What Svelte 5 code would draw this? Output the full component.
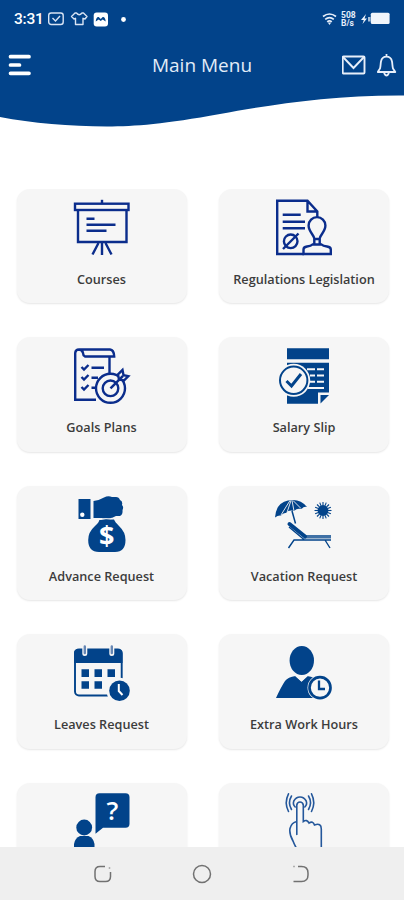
<script lang="ts">
	interface MenuItem {
		icon: string;
		label: string;
	}

	const items: MenuItem[] = [
		{ icon: 'courses', label: 'Courses' },
		{ icon: 'regulations', label: 'Regulations Legislation' },
		{ icon: 'goals', label: 'Goals Plans' },
		{ icon: 'salary', label: 'Salary Slip' },
		{ icon: 'advance', label: 'Advance Request' },
		{ icon: 'vacation', label: 'Vacation Request' },
		{ icon: 'leaves', label: 'Leaves Request' },
		{ icon: 'hours', label: 'Extra Work Hours' },
		{ icon: 'help', label: '' },
		{ icon: 'touch', label: '' }
	];

	const rays = Array.from({ length: 16 }, (_, i) => i * 22.5);
</script>

<div class="screen">
	<header>
		<svg class="wave" viewBox="0 0 404 128" preserveAspectRatio="none">
			<path d="M0 0H404V95.5C330 95 270 105 220 114C165 124 135 126.500 107 126.500C70 126.500 32 123 0 117Z" fill="#02438a" />
		</svg>
		<div class="status">
			<span class="time">3:31</span>
			<svg class="left-icons" width="82" height="18" viewBox="0 0 82 18" fill="none" stroke="#d9e4f4" stroke-width="1.4">
				<rect x="1.700" y="3" width="14.500" height="11.500" rx="2.500" />
				<path d="M5.500 8L8.500 11L13 6" />
				<path d="M28 3L24.500 6.500L27 9L28.500 8.300V14.500H36V8.300L38 9L40 6.500L36.500 3H35Q32.200 6.500 29.500 3Z" stroke-linejoin="round" />
				<rect x="46.700" y="2.500" width="14.300" height="14" rx="3" fill="#fff" stroke="none" />
				<path d="M48.700 11.500Q49.200 6.500 51.700 7L53.700 9L55.700 7Q58.200 6.500 58.700 11.500L55.700 9.500L53.700 11L51.700 9.500Z" fill="#02438a" stroke="none" />
				<circle cx="76.500" cy="9.500" r="2.400" fill="#fff" stroke="none" />
			</svg>
			<span class="spacer"></span>
			<svg class="wifi" width="15" height="14" viewBox="0 0 15 14" fill="none" stroke="#e6eefa" stroke-width="1.700">
				<path d="M1 4.500Q7.500 -.5 14 4.500M3.200 7.300Q7.500 3.800 11.800 7.300M5.200 9.800Q7.500 8 9.800 9.800" />
				<path d="M5.800 10.500L7.500 13L9.200 10.500Z" fill="#e6eefa" stroke="none" />
			</svg>
			<span class="rate"><span>508</span><span>B/s</span></span>
			<svg class="battery" width="32" height="14" viewBox="0 0 32 14" fill="#f1f5fb">
				<path d="M4 2L-1 8H1.800L.5 12L5 6.500H2.500Z" />
				<path d="M6 5H8.500V9.500H6Z" opacity=".7" />
				<rect x="8.800" y=".7" width="18.800" height="11.300" rx="1.500" />
			</svg>
		</div>
		<div class="titlebar">
			<svg class="burger" width="24" height="24" viewBox="0 0 24 24" stroke="#fff" stroke-width="3.700" stroke-linecap="round">
				<path d="M3.500 3.700H22M3.500 12H12.500M3.500 20.300H22" />
			</svg>
			<h1>Main Menu</h1>
			<div class="actions">
				<svg width="24" height="24" viewBox="0 0 24 24" fill="none" stroke="#e8effa" stroke-width="1.900">
					<rect x=".7" y="3.500" width="21.800" height="17" rx="1" />
					<path d="M1 4L11.500 15L22 4" />
				</svg>
				<svg width="20" height="24" viewBox="0 0 20 24" fill="none" stroke="#e8effa" stroke-width="1.800" stroke-linejoin="round">
					<path d="M9.500 1V3.500M.7 19H18.300L16 15.500C15.300 13 15.500 11 15 8.500C14.300 5 12 3.700 9.500 3.700C7 3.700 4.700 5 4 8.500C3.500 11 3.700 13 3 15.500Z" />
					<path d="M7 20Q9.500 25 12 20" />
				</svg>
			</div>
		</div>
	</header>

	<main>
		{#each items as item}
			<section class="card">
				<svg class="icon" viewBox="0 0 56 56">
					{#if item.icon === 'courses'}
						<g class="line">
							<path d="M28 .8V4" />
							<rect x="1" y="4.700" width="53.500" height="6.300" />
							<path d="M4 11V43H52.500V11" />
							<path d="M12.500 19.700H20.500M12.500 25.700H41.500M12.500 31.700H32.500M24.500 44L18.500 55.500M28 44V56M31.500 44L37.500 55.500" />
						</g>
					{:else if item.icon === 'regulations'}
						<g class="line">
							<path d="M28 55H1.200V1.800H31.500L41.300 12.500V18M31.500 2V12.500H41" />
							<path d="M6.700 15.700H24.700M6.700 22.700H29M6.700 29.200H29" />
							<circle cx="14.700" cy="42.300" r="6.800" />
							<path d="M7 50L22.500 34.500" />
							<path d="M38.300 46V39.500C38 36 32.600 32.500 32.600 26.500A8.400 8.400 0 0 1 49.400 26.500C49.400 32.500 44 36 43.700 39.500V46M38.300 40H43.700" />
							<path d="M27.500 55V50.500Q27.500 48 31 47.500Q35 47 36.500 45.500H45.500Q47 47 51 47.500Q54.800 48 54.800 50.500V55Z" />
						</g>
					{:else if item.icon === 'goals'}
						<g class="line">
							<path d="M22 51.700H1.200V5Q1.500 1.500 5 1.500H36Q40 2 40.200 8.500H11Q9 7.500 9 5Q8.500 2 5 1.500" />
							<path d="M35.500 8.500V25" />
							<path d="M7.500 19L10 21.500L14.500 17M7.500 29L10 31.500L14.500 27M7.500 39L10 41.500L14.500 37M17.500 19.700H30M17.500 29.700H24M17.500 39.700H21" />
							<circle cx="36.500" cy="40.300" r="14.500" />
							<circle cx="36.500" cy="40.300" r="7.800" />
							<path d="M45 31.500L44 26.500L48.500 22L49.500 27.200L54.300 28.200L50 32.500Z" fill="#f6f6f6" />
							<path d="M36.500 40.300L49 27.800" />
						</g>
					{:else if item.icon === 'salary'}
						<path d="M11 .3H53V11.300H11ZM11 14.700H53V44.500H42V55.700H11Z" />
						<path d="M44.500 55.500V47H53Z" />
						<g stroke="#f6f6f6" stroke-width="2">
							<path d="M31 21.300H39M41 21.300H48M34 27.500H39M41 27.500H48M34 33.700H39M41 33.700H48M32 40H48" />
						</g>
						<circle cx="17.700" cy="32.300" r="16.500" fill="#f6f6f6" />
						<circle cx="17.700" cy="32.300" r="13.700" fill="#f6f6f6" stroke="#02438a" stroke-width="2" />
						<path d="M10.500 33L15.500 38L25 26" fill="none" stroke="#02438a" stroke-width="3" />
					{:else if item.icon === 'advance'}
						<path d="M4.500 3H16.500V23H4.500Z" />
						<circle cx="8.300" cy="18.800" r="2.200" fill="#fff" />
						<path d="M19.500 5Q26 4 30 1.500Q34 -.5 38 1H42Q45 1 46 4Q49 5 48 9Q50 11 48.500 14Q49 19 46 20H42Q37 23 32 22H19.500Z" />
						<path d="M25.500 23.500Q32 21.500 40 23.500Q41 26 45 30Q51.500 36 51.500 44Q51.500 56 41 56H25Q14.200 56 14.200 44Q14.200 36 21 30Q25 26.500 25.500 23.500Z" />
						<path d="M22 23.300Q27 24 32 22.700Q38 24 42 22" fill="none" stroke="#f6f6f6" stroke-width="1" />
						<text class="dollar" x="32.800" y="49">$</text>
					{:else if item.icon === 'vacation'}
						<path d="M-1 21.500Q0 7 12 4.500Q24 2 31 11Q28 10 25.500 13Q21 12 18 15Q13 13.500 10 17Q7 16.500 5 19.500Q2 19 -1 21.500Z" />
						<path d="M14 4.500L5 19M15 4.500L11 16.500M16 4.500L18 15M17 4.500L25 12.500" stroke="#f6f6f6" stroke-width=".9" fill="none" />
						<path d="M16 15L19.500 27.500" stroke="#02438a" stroke-width="1.500" />
						<circle cx="47" cy="14.500" r="5.400" />
						{#each rays as angle}
							<path d="M47 9.500V6" stroke="#02438a" stroke-width="1.100" transform="rotate({angle} 47 14.500)" />
						{/each}
						<path d="M13.500 28L29 40.500" stroke="#02438a" stroke-width="4" stroke-linecap="round" />
						<path d="M28 39H55V42.500H28Z" opacity=".75" />
						<path d="M12.500 52L18 44H55M13 31L28 43.500M49 44L54 52" fill="none" stroke="#02438a" stroke-width="1.400" />
					{:else if item.icon === 'leaves'}
						<rect x="1" y="4.500" width="46.700" height="46" rx="4" fill="none" stroke="#02438a" stroke-width="1.900" />
						<path d="M0 18V8Q0 4 4 4H44.500Q48.500 4 48.500 8V18Z" />
						<path d="M10.800 2V8.500M37.800 2V8.500" stroke="#f6f6f6" stroke-width="5" stroke-linecap="round" />
						<path d="M10.800 1.500V8M37.800 1.500V8" stroke="#6586b4" stroke-width="2.400" stroke-linecap="round" />
						<path d="M7.500 24.300H15V32H7.500ZM20.500 24.300H28V32H20.500ZM33.500 24.300H41V32H33.500ZM7.500 36.300H15V43.700H7.500ZM20.500 36.300H28V43.700H20.500Z" />
						<circle cx="45.500" cy="45.700" r="13" fill="#f6f6f6" />
						<circle cx="45.500" cy="45.700" r="10.300" />
						<path d="M44.800 39V46L48.500 50" fill="none" stroke="#fff" stroke-width="2" />
					{:else if item.icon === 'hours'}
						<ellipse cx="25.800" cy="15.500" rx="12.200" ry="14.500" />
						<path d="M0 53Q5 42 9 36Q12 32 19.500 31L25.500 36.500L31 31Q39 32 43 36L40 53Z" />
						<path d="M19.500 30L25.500 35.500L31.500 30" fill="none" stroke="#f6f6f6" stroke-width="2" />
						<circle cx="44" cy="42.700" r="12.500" fill="#f6f6f6" />
						<circle cx="44" cy="42.700" r="10.500" fill="#f6f6f6" stroke="#02438a" stroke-width="2.700" />
						<path d="M43 35.500V44H49" fill="none" stroke="#02438a" stroke-width="2.300" />
					{:else if item.icon === 'help'}
						<path d="M25.500 .2H51.500Q55.500 .2 55.500 4.200V30.800Q55.500 34.800 51.500 34.800H29L21.500 40.800V4.200Q21.500 .2 25.500 .2Z" />
						<text class="question" x="38.500" y="27">?</text>
						<circle cx="10.200" cy="34.500" r="7.900" />
						<path d="M0 56V51Q1 45 6 43H14.500Q19.500 45 20.500 51V56Z" />
					{:else}
						<g fill="none" stroke="#24579b" stroke-width="1.600" stroke-linecap="round">
							<path d="M20.800 41.500V12Q21.300 9 24 9Q26.700 9 27.300 12V28.500Q31 26 33 30Q37 27.500 38.500 32Q45.300 29.500 45.300 36V56M20.800 28.500Q15.500 29.500 14 35.500Q13 41 17 48Q19 53 21 56" />
							<path d="M19.200 14Q16.500 11.500 17.800 8Q20 4 24 4Q28 4 30.200 8Q31.500 11.500 28.800 14" />
							<path d="M15.500 3Q11.500 9.500 15.500 16.500M32.500 3Q36.500 9.500 32.500 16.500M12.500 .8Q8 9.500 12.500 18.500M35.500 .8Q40 9.500 35.500 18.500" />
						</g>
					{/if}
				</svg>
				{#if item.label}
					<p>{item.label}</p>
				{/if}
			</section>
		{/each}
	</main>

	<nav>
		<svg viewBox="0 0 20 20"><path d="M12 2.500H7Q2 2.500 2 7.500V12.500Q2 17.500 7 17.500H12.500Q17.500 17.500 17.500 12.500V8M16.500 3.500V4.500" /></svg>
		<svg viewBox="0 0 20 20"><circle cx="10" cy="10" r="8.500" /></svg>
		<svg viewBox="0 0 20 20"><path d="M2.500 2.500H3.500M7 2.500H10.500Q17 2.500 17 9V11Q17 17.500 10.500 17.500H2.500" /></svg>
	</nav>
</div>

<style>
	:global(body) {
		background: #fff;
		overflow: hidden;
	}

	.screen {
		display: flex;
		flex-direction: column;
		width: 404px;
		height: 900px;
		overflow: hidden;
		background: #fff;
		font-family: 'Open Sans', 'Noto Sans', sans-serif;
	}

	header {
		position: relative;
		flex: none;
		height: 188.5px;
		color: #fff;
	}

	.wave {
		position: absolute;
		top: 0;
		left: 0;
		width: 404px;
		height: 128px;
	}

	.status {
		position: relative;
		display: flex;
		align-items: center;
		height: 38px;
		padding: 0 10px 0 14px;
		box-sizing: border-box;
	}

	.time {
		width: 33px;
		font: 500 15.5px Roboto, sans-serif;
		letter-spacing: -0.2px;
	}

	.left-icons {
		flex: none;
	}

	.spacer {
		flex: 1;
	}

	.wifi {
		margin-right: 4px;
	}

	.rate {
		display: flex;
		flex-direction: column;
		width: 17px;
		margin-right: 4px;
		font: 700 8.5px/8.5px Roboto, sans-serif;
		color: #e6eefa;
	}

	.battery {
		overflow: visible;
	}

	.titlebar {
		position: relative;
		display: grid;
		grid-template-columns: 70px 1fr 70px;
		align-items: center;
		height: 53px;
		padding: 0 7px;
	}

	h1 {
		margin: 0;
		padding-top: 1px;
		font-size: 19px;
		font-weight: 400;
		text-align: center;
		color: #e3ecf8;
	}

	.actions {
		display: flex;
		justify-content: flex-end;
		gap: 11px;
	}

	main {
		display: grid;
		flex: 1;
		grid-template-columns: 170px 170px;
		grid-auto-rows: 114.5px;
		gap: 34px 32.5px;
		min-height: 0;
		padding-left: 16.5px;
		overflow: hidden;
	}

	.card {
		display: flex;
		flex-direction: column;
		align-items: center;
		padding-top: 10.5px;
		box-sizing: border-box;
		border-radius: 13px;
		background: #f6f6f6;
		box-shadow: 0 1px 2px rgba(0, 0, 0, 0.1);
	}

	.icon {
		flex: none;
		width: 56px;
		height: 56px;
		overflow: visible;
		fill: #02438a;
	}

	.line {
		fill: none;
		stroke: #0b2d8c;
		stroke-width: 2.4;
	}

	.dollar,
	.question {
		fill: #fff;
		font-family: 'Open Sans', sans-serif;
		text-anchor: middle;
	}

	.dollar {
		font-size: 27px;
		font-weight: 700;
	}

	.question {
		font-size: 26px;
		font-weight: 600;
	}

	.card p {
		margin: 14.7px 0 0;
		font-size: 12.7px;
		font-weight: 600;
		line-height: 18px;
		white-space: nowrap;
		color: #3c3c3c;
	}

	nav {
		display: flex;
		flex: none;
		align-items: center;
		justify-content: center;
		gap: 79px;
		height: 53px;
		background: #efefef;
	}

	nav svg {
		width: 20px;
		height: 20px;
		fill: none;
		stroke: #717171;
		stroke-width: 1.5;
	}
</style>
